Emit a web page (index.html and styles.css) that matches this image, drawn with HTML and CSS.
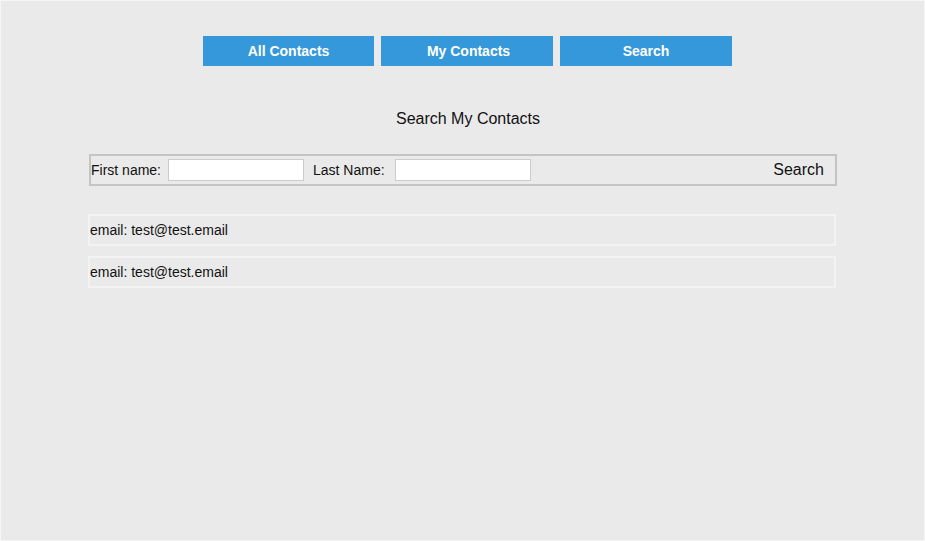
FILE: index.html
```html
<!DOCTYPE html>
<html>
<head>
<meta charset="utf-8">
<link rel="stylesheet" href="styles.css">
</head>
<body>
<div class="app">
  <nav class="tabs">
    <button class="tab tab-first">All Contacts</button>
    <button class="tab">My Contacts</button>
    <button class="tab">Search</button>
  </nav>
  <h1 class="title">Search My Contacts</h1>
  <form class="search-form">
    <label class="label">First name:</label>
    <input class="field" type="text">
    <label class="label label-last">Last Name:</label>
    <input class="field" type="text">
    <button class="search-btn" type="button">Search</button>
  </form>
  <ul class="results">
    <li class="result">email: test@test.email</li>
    <li class="result">email: test@test.email</li>
  </ul>
</div>
</body>
</html>
```

FILE: styles.css
```css
* { box-sizing: border-box; }
html, body { margin: 0; padding: 0; }
body {
  font-family: "Liberation Sans", Arial, sans-serif;
  color: #111;
  background: #f5f5f5;
}
.app {
  width: 925px;
  height: 541px;
  border: 1px solid #f6f6f6;
  background: #eaeaea;
  overflow: hidden;
}
.tabs {
  display: flex;
  justify-content: center;
  gap: 7px;
  padding-left: 10px;
  margin-top: 35px;
}
.tab {
  width: 172px;
  height: 30px;
  border: none;
  background: #3498db;
  color: #fff;
  font-family: "Liberation Sans", Arial, sans-serif;
  font-weight: bold;
  font-size: 14px;
  padding: 0 0 0 3px;
}
.tab-first { width: 171px; padding: 0; }
.tab:last-child { padding: 0; }
.title {
  margin: 43px 0 0;
  padding-left: 11px;
  text-align: center;
  font-weight: normal;
  font-size: 16px;
  line-height: 20px;
  height: 20px;
}
.search-form {
  display: flex;
  align-items: center;
  margin: 25px 0 0 88px;
  width: 748px;
  height: 32px;
  border: 2px solid #c4c4c4;
  padding: 0;
}
.label {
  font-size: 14px;
  margin-right: 7px;
}
.label-last { margin-left: 9px; margin-right: 10px; }
.field {
  width: 136px;
  height: 22px;
  border: 1px solid #cccccc;
  background: #fff;
  margin: 0;
  padding: 0 4px;
}
.search-btn {
  margin-left: auto;
  height: 28px;
  border: none;
  background: transparent;
  font-family: "Liberation Sans", Arial, sans-serif;
  font-size: 16px;
  color: #111;
  padding: 0 11px 0 0;
}
.results {
  list-style: none;
  margin: 28px 0 0 87px;
  padding: 0;
  display: flex;
  flex-direction: column;
  gap: 10px;
}
.result {
  width: 748px;
  height: 32px;
  border: 2px solid #f3f3f3;
  font-size: 14px;
  line-height: 28px;
  padding: 0;
}
```
